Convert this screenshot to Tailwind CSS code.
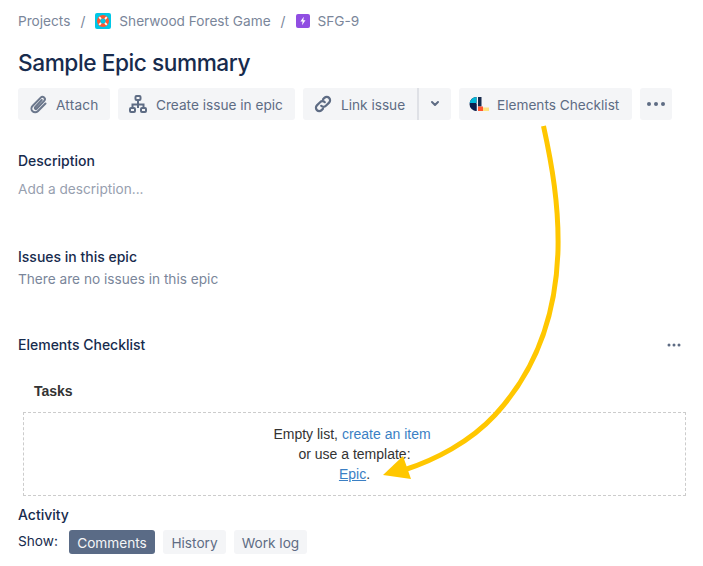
<!DOCTYPE html>
<html lang="en">
<head>
    <meta charset="UTF-8">
    <title>Sample Epic summary</title>
    <script src="https://cdn.jsdelivr.net/npm/@tailwindcss/browser@4"></script>
</head>
<body class="bg-white font-['Inter',sans-serif] text-[13.65px] text-[#172b4d] relative w-[703px] h-[566px] overflow-hidden">

    <div class="px-[18px]">
        <!-- breadcrumbs -->
        <nav class="flex items-center h-[20px] mt-[11px] text-[#7a869a] leading-[20px]">
            <span>Projects</span>
            <span class="ml-[10px]">/</span>
            <svg class="ml-[10px]" width="16" height="16" viewBox="0 0 16 16">
                <rect width="16" height="16" rx="2" fill="#00c7e6"/>
                <circle cx="8" cy="8" r="6" fill="#ff5630"/>
                <circle cx="8" cy="8" r="2.600" fill="#00c7e6"/>
                <path d="M4.200 4.200l1.800 1.800M11.800 4.200l-1.800 1.800M4.200 11.800l1.800-1.800M11.800 11.800l-1.800-1.800" stroke="#fff" stroke-width="1.800"/>
            </svg>
            <span class="ml-[8px]">Sherwood Forest Game</span>
            <span class="ml-[10px]">/</span>
            <svg class="ml-[10px]" width="14" height="14" viewBox="0 0 14 14">
                <rect width="14" height="14" rx="2" fill="#904ee2"/>
                <path d="M7.800 2.800L4.400 7.600h2.200l-.6 3.600 3.500-4.900H7.300z" fill="#fff"/>
            </svg>
            <span class="ml-[8px]">SFG-9</span>
        </nav>

        <h1 class="mt-[16px] text-[22.7px] leading-[32px] font-medium tracking-[-0.45px]">Sample Epic summary</h1>

        <!-- toolbar -->
        <div class="flex items-center gap-[8px] mt-[9px] text-[#5e6c84]">
            <button class="h-[32px] w-[92px] pl-[10px] flex items-center gap-[8px] bg-[#f4f5f7] rounded-[3px]">
                <svg width="20" height="20" viewBox="0 0 20 20" fill="none" stroke="#6b778c" stroke-width="2" stroke-linecap="round">
                    <path d="M17.500 9.500l-7.700 7.700a3.700 3.700 0 0 1-5.300-5.200l8.200-8.400a2.400 2.400 0 0 1 3.500 3.300l-7.600 7.800a1 1 0 0 1-1.500-1.400L13.800 6"/>
                </svg>
                <span class="pt-[2px] tracking-[0.2px]">Attach</span>
            </button>
            <button class="h-[32px] w-[177px] pl-[11px] flex items-center gap-[9px] bg-[#f4f5f7] rounded-[3px]">
                <svg width="18" height="18" viewBox="0 0 18 18" fill="none" stroke="#5e6c84" stroke-width="2">
                    <rect x="6.500" y="1" width="5" height="4" rx="1"/>
                    <rect x="1" y="13" width="5" height="4" rx="1"/>
                    <rect x="12" y="13" width="5" height="4" rx="1"/>
                    <path d="M9 5v8M3.500 13v-3.500h11V13"/>
                </svg>
                <span class="pt-[2px]">Create issue in epic</span>
            </button>
            <div class="flex h-[32px] w-[148px] bg-[#f4f5f7] rounded-[3px]">
                <button class="w-[116px] pl-[11px] flex items-center gap-[9px] border-r-2 border-[#dfe1e6]">
                    <svg width="18" height="18" viewBox="0 0 18 18" fill="none" stroke="#5e6c84" stroke-width="2.200" stroke-linecap="round">
                        <path d="M7.200 10.800a3.300 3.300 0 0 0 4.700 0l3.200-3.200a3.300 3.300 0 0 0-4.700-4.700L9 4.300"/>
                        <path d="M10.800 7.200a3.300 3.300 0 0 0-4.700 0l-3.200 3.200a3.300 3.300 0 0 0 4.700 4.700L9 13.700"/>
                    </svg>
                    <span class="pt-[2px]">Link issue</span>
                </button>
                <button class="flex-1 flex items-center justify-center">
                    <svg width="10" height="8" viewBox="0 0 10 8" fill="none" stroke="#5e6c84" stroke-width="2" stroke-linecap="round" stroke-linejoin="round">
                        <path d="M2 2l3 3 3-3"/>
                    </svg>
                </button>
            </div>
            <button class="h-[32px] w-[173px] pl-[10px] flex items-center gap-[8px] bg-[#f4f5f7] rounded-[3px]">
                <svg width="20" height="14" viewBox="0 0 20 14">
                    <path d="M7.500 0a7 7 0 0 0 0 14z" fill="#0b1f4d"/>
                    <path d="M7.500 0a7 7 0 0 0-6.900 6h6.900z" fill="#00b8d9"/>
                    <path d="M4 7h3.500v7a7 7 0 0 1-3.500-2z" fill="#0b1f4d"/>
                    <rect x="9" y="0" width="3.500" height="9.500" fill="#172b4d"/>
                    <rect x="9" y="9.500" width="5" height="4.500" fill="#ff5630"/>
                    <rect x="14" y="10.500" width="6" height="3.500" fill="#ffe380"/>
                </svg>
                <span class="pt-[2px]">Elements Checklist</span>
            </button>
            <button class="h-[32px] w-[32px] flex items-center justify-center bg-[#f4f5f7] rounded-[3px]">
                <svg width="20" height="6" viewBox="0 0 20 6" fill="#5e6c84">
                    <circle cx="3" cy="3" r="2"/>
                    <circle cx="10" cy="3" r="2"/>
                    <circle cx="17" cy="3" r="2"/>
                </svg>
            </button>
        </div>

        <section class="mt-[31px]">
            <h2 class="font-medium text-[14px] leading-[20px]">Description</h2>
            <p class="mt-[8px] leading-[20px] text-[#97a0af]">Add a description...</p>
        </section>

        <section class="mt-[48px]">
            <h2 class="font-medium text-[14px] leading-[20px]">Issues in this epic</h2>
            <p class="mt-[2px] leading-[20px] text-[#7a869a]">There are no issues in this epic</p>
        </section>

        <section class="mt-[46px]">
            <div class="flex items-center justify-between h-[20px]">
                <h2 class="font-medium text-[14px] leading-[20px]">Elements Checklist</h2>
                <svg class="mr-[4px]" width="14" height="4" viewBox="0 0 14 4" fill="#5e6c84">
                    <circle cx="2" cy="2" r="1.500"/>
                    <circle cx="7" cy="2" r="1.500"/>
                    <circle cx="12" cy="2" r="1.500"/>
                </svg>
            </div>
            <h3 class="mt-[26px] ml-[16px] font-['Liberation_Sans',sans-serif] text-[14px] font-bold leading-[20px] text-[#333]">Tasks</h3>
            <div class="mt-[11px] ml-[5px] w-[663px] h-[84px] border border-dashed border-[#ccc] font-['Liberation_Sans',sans-serif] text-[14px] text-center text-[#333] leading-[20px] pt-[11px]">
                <p class="pr-[5px]">Empty list, <a class="text-[#3b7fc4]">create an item</a></p>
                <p>or use a template:</p>
                <p><a class="text-[#3b7fc4] underline">Epic</a>.</p>
            </div>
        </section>

        <section class="mt-[9px]">
            <h2 class="font-medium text-[14px] leading-[20px]">Activity</h2>
            <div class="flex items-center mt-[5px]">
                <span class="w-[51px] leading-[20px] -mt-[2px]">Show:</span>
                <div class="flex gap-[8px]">
                    <button class="h-[24px] w-[86px] pt-[2px] rounded-[3px] bg-[#5a6b86] text-[#f4f5f7]">Comments</button>
                    <button class="h-[24px] w-[63px] pt-[2px] rounded-[3px] bg-[#f4f5f7] text-[#5e6c84]">History</button>
                    <button class="h-[24px] w-[73px] pt-[2px] rounded-[3px] bg-[#f4f5f7] text-[#5e6c84]">Work log</button>
                </div>
            </div>
        </section>
    </div>

    <!-- annotation arrow over the page -->
    <svg class="absolute left-0 top-0 pointer-events-none" width="703" height="566" viewBox="0 0 703 566" fill="none">
        <path d="M543.500 126C552 165 559 205 558 250C556 320 532 375 495 415C470 442 435 460 404 470" stroke="#ffc700" stroke-width="5"/>
        <path d="M383 475L403 456L411 479Z" fill="#ffc700"/>
    </svg>

</body>
</html>
